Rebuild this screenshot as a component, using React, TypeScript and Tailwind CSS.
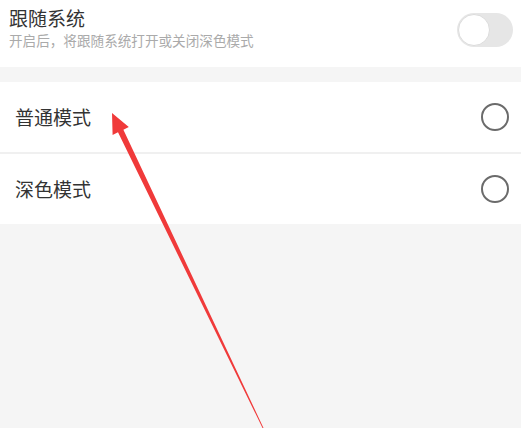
export default function App() {
  return (
    <div
      className="relative h-[428px] w-[521px] overflow-hidden bg-[#f5f5f5]"
      style={{ fontFamily: '"Noto Sans CJK SC", "Noto Sans", sans-serif' }}
    >
      {/* follow system */}
      <div className="flex h-[67px] items-start justify-between bg-white pl-[9px] pr-[8px]">
        <div className="flex flex-col pt-[6px]">
          <span className="text-[19px] leading-[24px] text-[#333]">跟随系统</span>
          <span className="mt-[1px] text-[13.6px] leading-[18px] text-[#aaa]">开启后，将跟随系统打开或关闭深色模式</span>
        </div>
        <div className="mt-[13px] flex h-[34px] w-[56px] items-center rounded-full bg-[#e6e6e6] px-[1px]">
          <div className="h-[32px] w-[32px] rounded-full border border-[#dcdcdc] bg-white" />
        </div>
      </div>

      <div className="h-[15px]" />

      {/* modes */}
      <div className="flex flex-col gap-[2px] bg-[#f0f0f0]">
        <ModeRow label="普通模式" />
        <ModeRow label="深色模式" />
      </div>

      {/* red annotation arrow */}
      <svg className="pointer-events-none absolute left-0 top-0" width="521" height="428" viewBox="0 0 521 428">
        <polygon
          points="112,113 128.8,127.1 123.4,129.7 263.5,428 262.5,428 118,132.3 112.6,134.9"
          fill="#f03a3a"
        />
      </svg>
    </div>
  )
}

function ModeRow({ label }: { label: string }) {
  return (
    <div className="flex h-[70px] items-center justify-between bg-white pl-[15px] pr-[12px]">
      <span className="text-[19px] text-[#333]">{label}</span>
      <div className="h-[28px] w-[28px] rounded-full border-2 border-[#6b6b6b]" />
    </div>
  )
}
